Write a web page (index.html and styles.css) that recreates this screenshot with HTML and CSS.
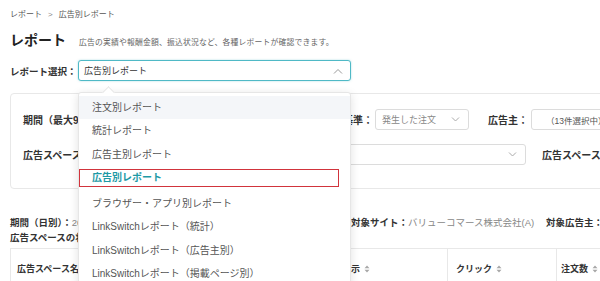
FILE: index.html
```html
<!DOCTYPE html>
<html lang="ja">
<head>
<meta charset="utf-8">
<title>広告別レポート</title>
<link rel="stylesheet" href="styles.css">
</head>
<body>
<div class="page">
  <div class="crumbs"><span>レポート</span><span class="sep">&gt;</span><span>広告別レポート</span></div>
  <div class="head">
    <h1>レポート</h1>
    <p class="desc">広告の実績や報酬金額、振込状況など、各種レポートが確認できます。</p>
  </div>
  <div class="pick">
    <span class="lbl">レポート選択：</span>
    <div class="select-wrap">
      <div class="select open">
        <span>広告別レポート</span>
        <svg class="chev" width="10" height="6" viewBox="0 0 10 6"><path d="M1 5.5 L5 1.5 L9 5.5" fill="none" stroke="#999" stroke-width="1"/></svg>
      </div>
      <div class="menu">
        <ul>
          <li class="hover">注文別レポート</li>
          <li>統計レポート</li>
          <li>広告主別レポート</li>
          <li class="sel"><span class="mark">広告別レポート</span></li>
          <li>ブラウザー・アプリ別レポート</li>
          <li>LinkSwitchレポート（統計）</li>
          <li>LinkSwitchレポート（広告主別）</li>
          <li>LinkSwitchレポート（掲載ページ別）</li>
        </ul>
      </div>
    </div>
  </div>

  <div class="panel">
    <div class="row">
      <span class="flbl w1">期間（最大90日）：</span>
      <div class="inp w-date">2021/01/01 〜 2021/01/31</div>
      <span class="flbl">集計基準：</span>
      <div class="inp w-basis"><span class="muted">発生した注文</span><svg class="chev" width="9" height="5" viewBox="0 0 9 5"><path d="M1 0.5 L4.5 4 L8 0.5" fill="none" stroke="#aaa" stroke-width="1"/></svg></div>
      <span class="flbl ml">広告主：</span>
      <div class="inp w-adv"><span class="cnt">（13件選択中）</span></div>
    </div>
    <div class="row">
      <span class="flbl w1">広告スペース：</span>
      <div class="inp w-space"><span></span><svg class="chev" width="9" height="5" viewBox="0 0 9 5"><path d="M1 0.5 L4.5 4 L8 0.5" fill="none" stroke="#aaa" stroke-width="1"/></svg></div>
      <span class="flbl ml2">広告スペースの状態：</span>
    </div>
  </div>

  <div class="info">
    <div class="line">
      <span class="ib w-per"><b>期間（日別）：</b><span class="muted">2021/01/01</span></span>
      <span class="ib w-site"><b>対象サイト：</b><span class="muted">バリューコマース株式会社(A)</span></span>
      <span class="ib"><b>対象広告主：</b></span>
    </div>
    <div class="line"><b>広告スペースの状態：</b><span class="muted">すべて</span></div>
  </div>

  <div class="table">
    <div class="th c1">広告スペース名</div>
    <div class="th c2"></div>
    <div class="th c3">表示 <svg class="sort" width="6" height="8" viewBox="0 0 6 8"><path d="M3 0.5 L5.5 3.2 L0.5 3.2 Z M3 7.5 L5.5 4.8 L0.5 4.8 Z" fill="#a8a8a8"/></svg></div>
    <div class="th c4">クリック <svg class="sort" width="6" height="8" viewBox="0 0 6 8"><path d="M3 0.5 L5.5 3.2 L0.5 3.2 Z M3 7.5 L5.5 4.8 L0.5 4.8 Z" fill="#a8a8a8"/></svg></div>
    <div class="th c5">注文数 <svg class="sort" width="6" height="8" viewBox="0 0 6 8"><path d="M3 0.5 L5.5 3.2 L0.5 3.2 Z M3 7.5 L5.5 4.8 L0.5 4.8 Z" fill="#a8a8a8"/></svg></div>
  </div>
</div>
</body>
</html>
```
FILE: styles.css
```css
* { box-sizing: border-box; }
html, body { margin: 0; padding: 0; background: #fff; overflow: hidden; }
body {
  font-family: "Liberation Sans", "Noto Sans CJK JP", sans-serif;
  color: #333;
  width: 600px;
  height: 281px;
}
.page { width: 760px; padding: 9px 0 0 10px; }

.crumbs { font-size: 8px; color: #555; height: 12px; line-height: 12px; display: flex; gap: 6px; }
.crumbs .sep { color: #888; }

.head { display: flex; align-items: baseline; margin-top: 8px; height: 20px; }
.head h1 { margin: 0; font-size: 14px; font-weight: 700; color: #222; }
.head .desc { margin: 0 0 0 13px; font-size: 7.8px; color: #666; letter-spacing: 0.2px; }

.pick { display: flex; align-items: center; margin-top: 11px; height: 21px; }
.pick .lbl { font-size: 9.5px; font-weight: 700; width: 68px; color: #333; }
.select-wrap { position: relative; z-index: 5; }
.select {
  width: 273px; height: 21px;
  border: 1px solid #4fb9c6; border-radius: 3px;
  box-shadow: 0 0 2px rgba(79, 185, 198, 0.5);
  display: flex; align-items: center; justify-content: space-between;
  padding: 0 7px 0 5px; font-size: 9px; color: #333; background: #fff;
}
.menu {
  position: absolute; left: 0; top: 32px; width: 273px;
  background: #fff; border: 1px solid #e6e6e6; border-radius: 3px;
  box-shadow: 0 2px 10px rgba(0,0,0,0.12);
  padding-top: 3px;
}
.menu::before {
  content: ""; position: absolute; top: -5px; left: 25px;
  width: 8px; height: 8px; background: #fff;
  border-left: 1px solid #e6e6e6; border-top: 1px solid #e6e6e6;
  transform: rotate(45deg);
}
.menu ul { list-style: none; margin: 0; padding: 0; }
.menu li {
  height: 23.3px; line-height: 23.3px; padding-left: 13px;
  font-size: 10px; color: #555; white-space: nowrap; position: relative;
}
.menu li.hover { background: #f4f6f9; }
.menu li.sel { padding-left: 0; }
.menu li.sel .mark {
  display: block; margin: 3px 11px 2px 0; height: 18px; line-height: 16px;
  border: 1.5px solid #d1343c; padding-left: 12px;
  color: #1e9aa6; font-weight: 700; background: #fff;
}

.panel {
  margin-top: 12px; width: 700px; height: 96px;
  border: 1px solid #e8e8e8; border-radius: 4px;
  padding: 15px 0 0 12px;
  display: flex; flex-direction: column; gap: 14px;
}
.row { display: flex; align-items: center; height: 21px; }
.flbl { font-size: 10px; font-weight: 700; color: #333; white-space: nowrap; }
.w1 { width: 90px; }
.inp {
  height: 21px; border: 1px solid #dcdcdc; border-radius: 3px;
  display: flex; align-items: center; justify-content: space-between;
  padding: 0 8px 0 6px; font-size: 9px; color: #555; background: #fff;
}
.w-date { width: 205px; margin-right: 5px; }
.w-basis { width: 94px; margin-left: 2px; }
.ml { margin-left: 19px; margin-right: 3px; }
.w-adv { width: 90px; }
.cnt { font-size: 8.5px; padding-left: 8px; color: #555; }
.muted { color: #888; font-weight: 400; }
.w-space { width: 413px; }
.ml2 { margin-left: 16px; }

.info { margin-top: 26px; font-size: 9.5px; }
.info .line { height: 15px; line-height: 15px; white-space: nowrap; display: flex; }
.info b { color: #333; font-weight: 700; }
.ib { display: inline-block; }
.w-per { width: 341px; }
.w-site { width: 195px; }

.table {
  margin-top: 3px; width: 720px; height: 40px;
  border: 1px solid #e8e8e8; display: flex;
}
.th {
  font-size: 9px; font-weight: 700; color: #333; padding: 13px 0 0 6px;
  border-right: 1px solid #e8e8e8; white-space: nowrap;
  display: flex; align-items: flex-start; gap: 4px;
}
.th .sort { margin-top: 3px; }
.c1 { width: 160px; }
.c2 { width: 169px; }
.c3 { width: 108px; padding-left: 2px; }
.c4 { width: 109px; padding-left: 8px; }
.c5 { width: 120px; padding-left: 4px; }
```
